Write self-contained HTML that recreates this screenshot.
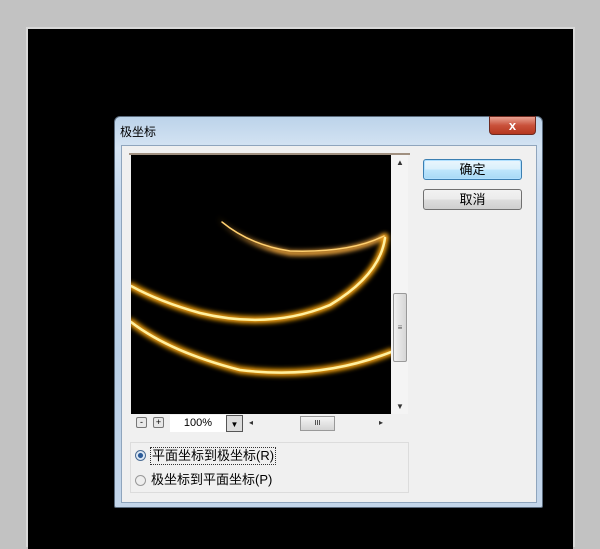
<!DOCTYPE html>
<html><head><meta charset="utf-8"><style>
*{margin:0;padding:0;box-sizing:border-box}
body{width:600px;height:537px;background:#c2c2c2;position:relative;overflow:hidden;font-family:"Liberation Sans","Noto Sans CJK SC",sans-serif}
.a{position:absolute}
</style></head><body>
<div class="a" style="left:26px;top:27px;width:549px;height:520px;background:#d8d8d8"></div>
<div class="a" style="left:28px;top:29px;width:545px;height:520px;background:#000"></div>
<div class="a" style="left:114px;top:116px;width:429px;height:392px;border-radius:6px 6px 2px 2px;background:linear-gradient(180deg,#bcd3ea 0%,#d5e4f3 8%,#c6d9ee 20%,#b9cfe6 60%,#c4d6ea 100%);border:1px solid #5a6a7c"></div>
<div class="a" style="left:120px;top:123px;font-size:12px;color:#000">极坐标</div>
<div class="a" style="left:489px;top:116px;width:47px;height:19px;border-radius:0 0 4px 4px;background:linear-gradient(180deg,#e9a393,#c9513a 50%,#b5371f);border:1px solid #6d2a20;color:#fff;font-size:13px;font-weight:bold;text-align:center;line-height:17px">x</div>
<div class="a" style="left:121px;top:145px;width:416px;height:358px;background:#f0f0f0;border:1px solid #8fa5bd"></div>
<div class="a" style="left:129px;top:153px;width:281px;height:283px;background:#f0f0f0;border-top:2px solid #a09080"></div>
<svg class="a" style="left:131px;top:155px" width="260" height="259" viewBox="131 155 260 259">
<defs><filter id="g" x="-20%" y="-20%" width="140%" height="140%"><feGaussianBlur stdDeviation="2.5"/></filter>
<linearGradient id="f" x1="0" x2="1"><stop offset="0" stop-color="#ffb040" stop-opacity="0"/><stop offset="0.35" stop-color="#ffb040"/></linearGradient></defs>
<rect x="131" y="155" width="260" height="259" fill="#000"/>
<g fill="none" stroke-linecap="round">
<path d="M217 218 Q245 245 290 253 Q350 255 385 236" stroke="url(#f)" stroke-width="5" filter="url(#g)"/>
<path d="M385 238 Q380 275 330 305 Q270 330 200 313 Q160 302 131 286" stroke="#ffa810" stroke-width="7" filter="url(#g)"/>
<path d="M131 322 Q170 352 240 370 Q320 380 391 352" stroke="#ffa810" stroke-width="7" filter="url(#g)"/>
<path d="M222 222 Q250 245 290 251 Q350 253 384 236" stroke="#ffd070" stroke-width="1.5"/>
<path d="M385 238 Q380 275 330 305 Q270 330 200 313 Q160 302 131 286" stroke="#fff0a0" stroke-width="2.5"/>
<path d="M131 322 Q170 352 240 370 Q320 380 391 352" stroke="#fff0a0" stroke-width="2.5"/>
</g></svg>
<div class="a" style="left:391px;top:155px;width:17px;height:259px;background:#f4f4f4"></div>
<div class="a" style="left:396px;top:158px;font-size:8px;color:#333">▲</div>
<div class="a" style="left:396px;top:402px;font-size:8px;color:#333">▼</div>
<div class="a" style="left:393px;top:293px;width:14px;height:69px;border:1px solid #999;border-radius:2px;background:linear-gradient(90deg,#f0f0f0,#d6d6d6);font-size:8px;text-align:center;line-height:67px;color:#555">≡</div>
<div class="a" style="left:136px;top:417px;width:11px;height:11px;border:1px solid #777;border-radius:2px;background:#e8e8e8;font-size:9px;line-height:9px;text-align:center">-</div>
<div class="a" style="left:153px;top:417px;width:11px;height:11px;border:1px solid #777;border-radius:2px;background:#e8e8e8;font-size:9px;line-height:9px;text-align:center">+</div>
<div class="a" style="left:170px;top:415px;width:56px;height:17px;background:#fff;font-size:11px;text-align:center;line-height:17px">100%</div>
<div class="a" style="left:226px;top:415px;width:17px;height:17px;border:1px solid #555;background:#ddd;font-size:8px;text-align:center;line-height:17px">▼</div>
<div class="a" style="left:249px;top:418px;font-size:8px;color:#333">◂</div>
<div class="a" style="left:300px;top:416px;width:35px;height:15px;border:1px solid #999;background:linear-gradient(#f4f4f4,#d4d4d4);font-size:7px;text-align:center;line-height:13px">III</div>
<div class="a" style="left:379px;top:418px;font-size:8px;color:#333">▸</div>
<div class="a" style="left:423px;top:159px;width:99px;height:21px;border:1px solid #3c7fb1;border-radius:3px;background:linear-gradient(#eaf6fd,#d9f0fc 50%,#bee6fd 51%,#a7d9f5);font-size:13px;text-align:center;line-height:19px;box-shadow:inset 0 0 0 1px #b0e0ff">确定</div>
<div class="a" style="left:423px;top:189px;width:99px;height:21px;border:1px solid #707070;border-radius:3px;background:linear-gradient(#f2f2f2,#ebebeb 50%,#dddddd 51%,#cfcfcf);font-size:13px;text-align:center;line-height:19px">取消</div>
<div class="a" style="left:130px;top:442px;width:279px;height:51px;border:1px solid #dcdcdc"></div>
<div class="a" style="left:135px;top:450px;width:11px;height:11px;border-radius:50%;border:1px solid #4a6c94;background:radial-gradient(#2a5a98 35%,#dde8f4 45%)"></div>
<div class="a" style="left:150px;top:447px;font-size:13px;border:1px dotted #333;padding:0 1px;line-height:16px">平面坐标到极坐标(R)</div>
<div class="a" style="left:135px;top:475px;width:11px;height:11px;border-radius:50%;border:1px solid #999;background:#eee"></div>
<div class="a" style="left:151px;top:472px;font-size:13px;line-height:16px">极坐标到平面坐标(P)</div>
</body></html>
